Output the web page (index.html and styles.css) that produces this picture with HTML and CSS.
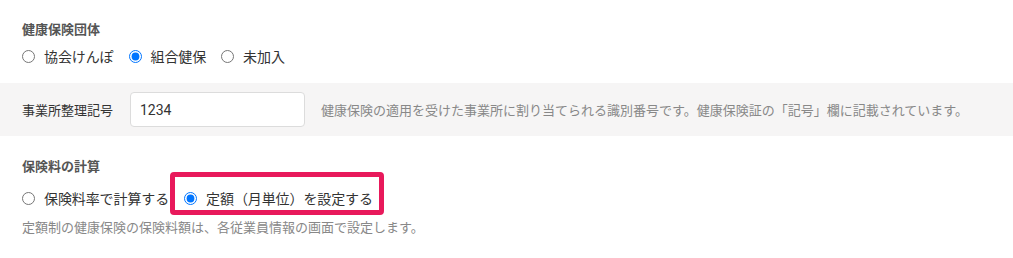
FILE: index.html
```html
<!DOCTYPE html>
<html lang="ja">
<head>
<meta charset="utf-8">
<link rel="stylesheet" href="styles.css">
</head>
<body>
<div class="page">
  <section class="group first">
    <div class="title">健康保険団体</div>
    <div class="options">
      <label class="opt"><input type="radio" name="g1"><span>協会けんぽ</span></label>
      <label class="opt"><input type="radio" name="g1" checked><span>組合健保</span></label>
      <label class="opt"><input type="radio" name="g1"><span>未加入</span></label>
    </div>
  </section>
  <div class="band">
    <div class="band-label">事業所整理記号</div>
    <input class="text-input" type="text" value="1234">
    <div class="band-help">健康保険の適用を受けた事業所に割り当てられる識別番号です。健康保険証の「記号」欄に記載されています。</div>
  </div>
  <section class="group second">
    <div class="title">保険料の計算</div>
    <div class="options">
      <label class="opt"><input type="radio" name="g2"><span>保険料率で計算する</span></label>
      <label class="opt"><input type="radio" name="g2" checked><span>定額（月単位）を設定する</span></label>
    </div>
    <div class="help">定額制の健康保険の保険料額は、各従業員情報の画面で設定します。</div>
  </section>
  <div class="highlight"></div>
</div>
</body>
</html>
```
FILE: styles.css
```css
html, body {
  margin: 0;
  padding: 0;
  background: #fff;
}
body {
  font-family: "Noto Sans CJK JP", "Noto Sans", sans-serif;
  color: #333;
  font-size: 14px;
}
.page {
  position: relative;
  width: 1013px;
  height: 258px;
}
.group {
  padding: 0 22px;
  display: flex;
  flex-direction: column;
}
.group.first {
  padding-top: 19px;
  gap: 7px;
}
.group.second {
  padding-top: 20px;
}
.title {
  font-size: 13px;
  font-weight: bold;
  color: #555;
  line-height: 20px;
}
.options {
  display: flex;
  align-items: center;
  gap: 15px;
  height: 20px;
}
.group.second .options {
  margin-top: 12px;
}
.opt {
  display: flex;
  align-items: center;
  line-height: 20px;
  font-size: 14px;
  color: #333;
  letter-spacing: -0.1px;
}
.opt input {
  width: 13px;
  height: 13px;
  margin: 0 9px 0 0;
}
.band {
  margin-top: 17px;
  height: 53px;
  background: #f6f5f5;
  display: flex;
  align-items: center;
  padding: 0 22px;
}
.band-label {
  font-size: 13px;
  width: 108px;
  line-height: 20px;
  color: #333;
}
.text-input {
  box-sizing: border-box;
  width: 175px;
  height: 35px;
  border: 1px solid #dcdcdc;
  border-radius: 4px;
  background: #fff;
  padding: 0 9px;
  font-family: Roboto, "Noto Sans CJK JP", sans-serif;
  font-size: 14px;
  color: #333;
  outline: none;
}
.band-help {
  margin-left: 16px;
  font-size: 13px;
  color: #888;
  line-height: 20px;
  white-space: nowrap;
}
.help {
  margin-top: 9px;
  font-size: 13px;
  color: #888;
  line-height: 20px;
}
.highlight {
  position: absolute;
  left: 170px;
  top: 172px;
  width: 214px;
  height: 43px;
  box-sizing: border-box;
  border: 5px solid #e8195b;
  border-radius: 4px;
  pointer-events: none;
}
```
